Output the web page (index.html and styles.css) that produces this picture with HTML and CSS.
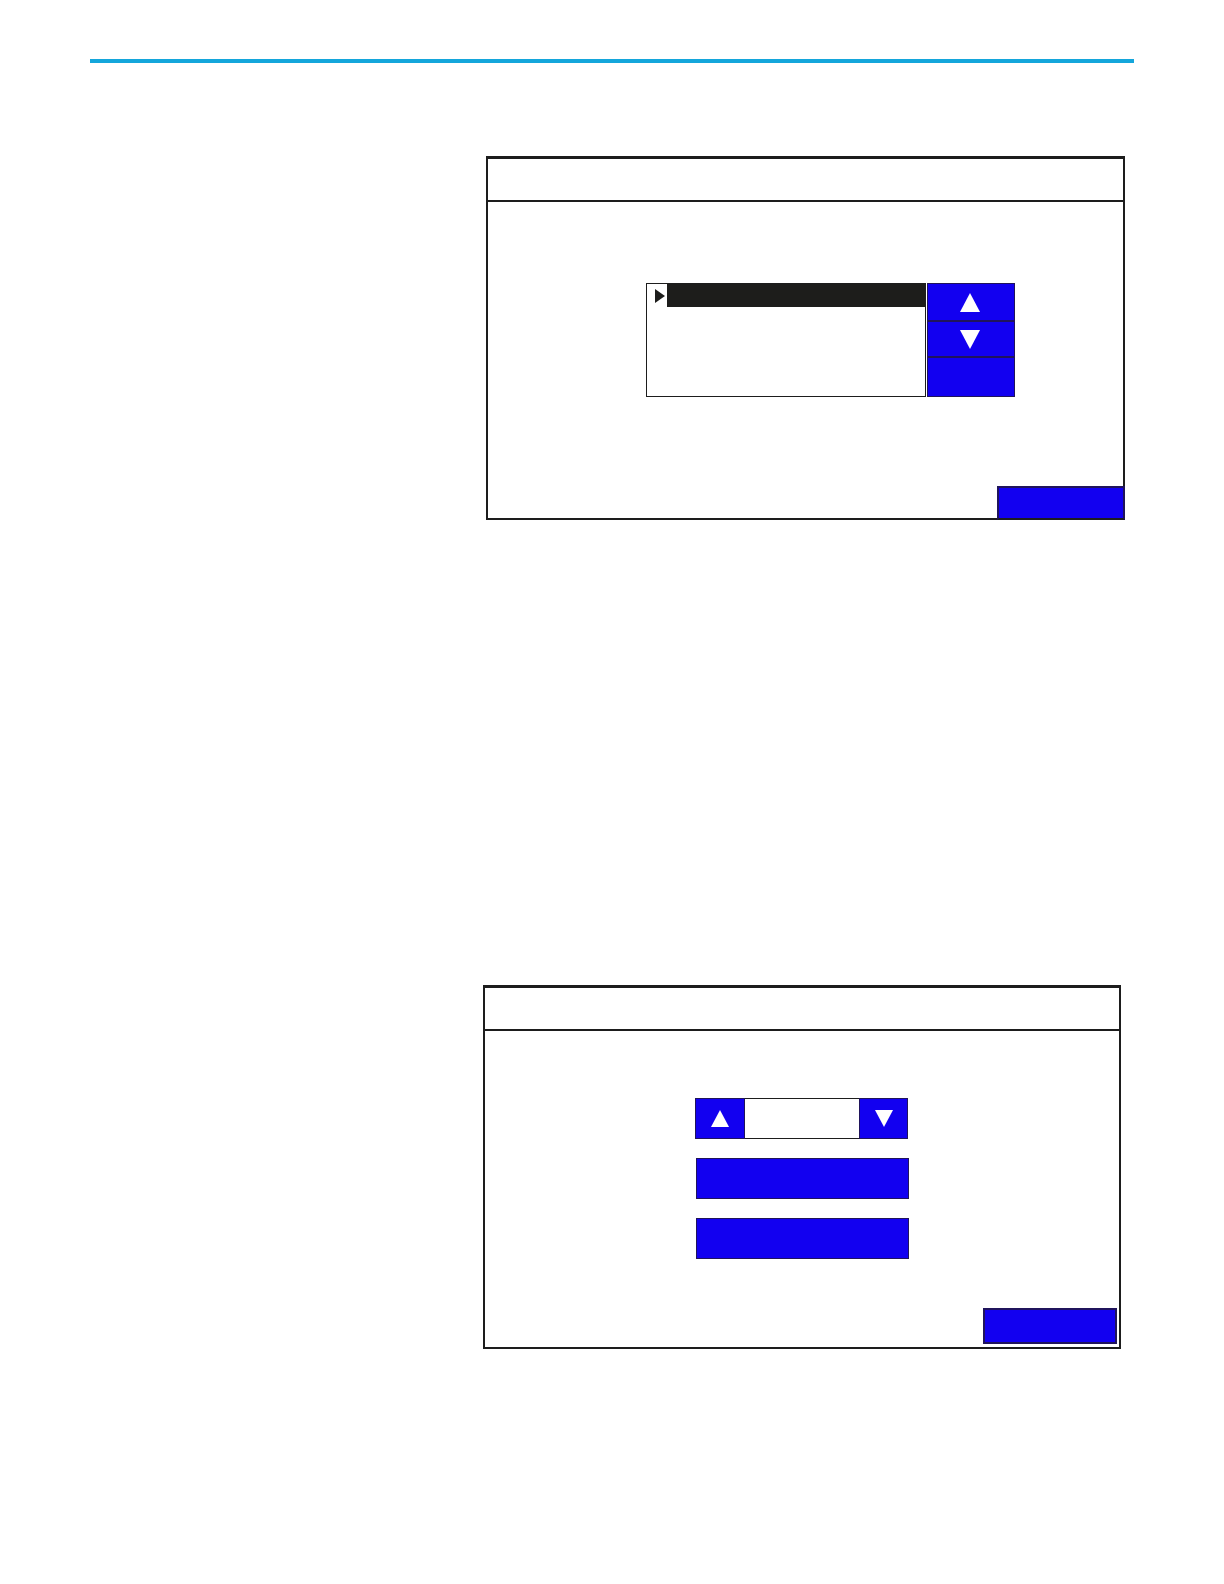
FILE: index.html
```
<!DOCTYPE html>
<html lang="en">
<head>
    <meta charset="UTF-8">
    <meta name="viewport" content="width=device-width, initial-scale=1">
    <title>Panels</title>
    <link rel="stylesheet" href="styles.css">
</head>
<body>
<div class="page">
    <hr class="rule">

    <section class="panel panel-list">
        <header class="panel-header"></header>
        <div class="panel-body">
            <div class="picker">
                <ul class="list">
                    <li class="selected">
                        <svg class="pointer" width="10" height="14" viewBox="0 0 10 14"><path d="M0 0 10 7 0 14z"/></svg>
                        <span class="bar"></span>
                    </li>
                </ul>
                <div class="keys">
                    <button type="button" aria-label="Up">
                        <svg width="20" height="19" viewBox="0 0 20 19"><path d="M10 0 20 19H0z"/></svg>
                    </button>
                    <button type="button" aria-label="Down">
                        <svg width="20" height="19" viewBox="0 0 20 19"><path d="M0 0H20L10 19z"/></svg>
                    </button>
                    <button type="button" aria-label="Enter"></button>
                </div>
            </div>
            <button type="button" class="close" aria-label="Close"></button>
        </div>
    </section>

    <section class="panel panel-value">
        <header class="panel-header"></header>
        <div class="panel-body">
            <div class="controls">
                <div class="stepper">
                    <button type="button" aria-label="Up">
                        <svg width="18" height="17" viewBox="0 0 18 17"><path d="M9 0 18 17H0z"/></svg>
                    </button>
                    <input type="text" aria-label="Value">
                    <button type="button" aria-label="Down">
                        <svg width="18" height="17" viewBox="0 0 18 17"><path d="M0 0H18L9 17z"/></svg>
                    </button>
                </div>
                <button type="button" class="wide" aria-label="Apply"></button>
                <button type="button" class="wide" aria-label="Reset"></button>
            </div>
            <button type="button" class="close" aria-label="Close"></button>
        </div>
    </section>
</div>
</body>
</html>
```
FILE: styles.css
```
*{
    margin: 0;
    padding: 0;
    box-sizing: border-box;
    list-style: none;
}
body{
    background-color: #fff;
    font-family: "Liberation Sans", Arial, sans-serif;
}
.page{
    padding: 59px 90px 233px;
}
.rule{
    height: 4px;
    border: none;
    background-color: #14a6db;
}

/* panels */
.panel{
    border: 2px solid #1d1d1d;
    border-top-width: 3px;
}
.panel-list{
    margin: 93px 9px 0 396px;
}
.panel-value{
    margin: 465px 13px 0 393px;
}
.panel-header{
    height: 43px;
    border-bottom: 2px solid #1d1d1d;
}
.panel-body{
    display: flex;
    flex-direction: column;
}

/* buttons */
button{
    display: flex;
    align-items: center;
    justify-content: center;
    border: 1px solid #20145c;
    background-color: #1200f0;
    cursor: pointer;
}
button svg{
    fill: #fff;
}
.close{
    align-self: flex-end;
}

/* list */
.picker{
    display: flex;
    gap: 1px;
    height: 114px;
    margin: 81px 108px 89px 158px;
}
.list{
    flex: 1;
    border: 1px solid #1d1d1d;
}
.selected{
    display: flex;
    align-items: center;
    gap: 2px;
    height: 23px;
    padding-left: 8px;
}
.pointer{
    fill: #1d1d1b;
}
.bar{
    flex: 1;
    height: 100%;
    background-color: #1d1d1b;
}
.keys{
    display: grid;
    grid-template-rows: 38px 36px 1fr;
    width: 88px;
    border: 1px solid #20145c;
}
.keys button{
    padding-right: 2px;
    border: none;
    border-bottom: 2px solid #20145c;
}
.keys button:last-child{
    border-bottom: none;
}
.panel-list .close{
    width: 128px;
    height: 34px;
    margin: 0 -2px -2px 0;
    border-width: 2px;
    border-bottom-color: #1d1d1d;
}

/* value */
.controls{
    display: flex;
    flex-direction: column;
    gap: 19px;
    margin: 67px 210px 49px;
}
.stepper{
    display: flex;
    height: 41px;
    margin-right: 1px;
}
.stepper button{
    width: 50px;
}
.stepper button:last-child{
    width: 49px;
}
.stepper input{
    flex: 1;
    min-width: 0;
    border: 1px solid #1d1d1d;
    border-left: none;
    border-right: none;
    text-align: center;
    font-size: 16px;
}
.wide{
    height: 41px;
    margin-left: 1px;
}
.panel-value .close{
    width: 134px;
    height: 36px;
    margin: 0 2px 3px 0;
    border-width: 2px;
}
```
